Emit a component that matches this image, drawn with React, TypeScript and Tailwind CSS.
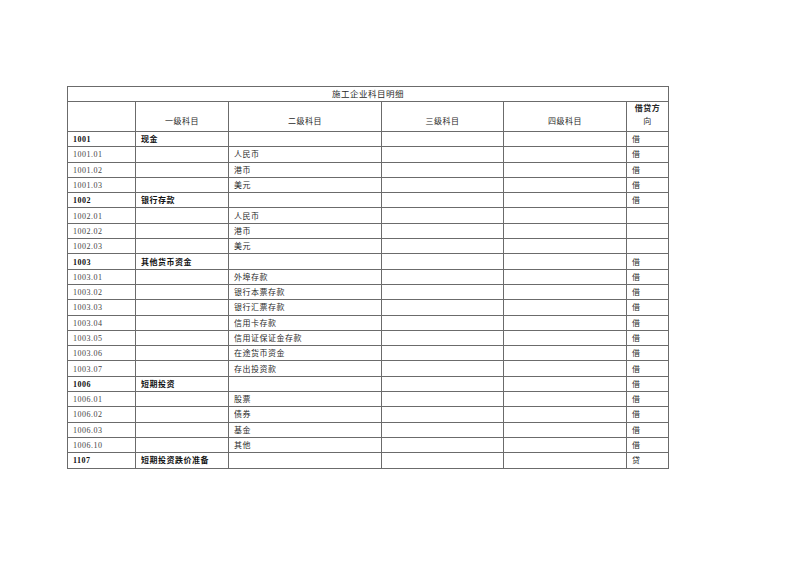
type Row = {
  code: string;
  first: string;
  second: string;
  dir: string;
  bold?: boolean;
};

const rows: Row[] = [
  { code: "1001", first: "现金", second: "", dir: "借", bold: true },
  { code: "1001.01", first: "", second: "人民币", dir: "借" },
  { code: "1001.02", first: "", second: "港币", dir: "借" },
  { code: "1001.03", first: "", second: "美元", dir: "借" },
  { code: "1002", first: "银行存款", second: "", dir: "借", bold: true },
  { code: "1002.01", first: "", second: "人民币", dir: "" },
  { code: "1002.02", first: "", second: "港币", dir: "" },
  { code: "1002.03", first: "", second: "美元", dir: "" },
  { code: "1003", first: "其他货币资金", second: "", dir: "借", bold: true },
  { code: "1003.01", first: "", second: "外埠存款", dir: "借" },
  { code: "1003.02", first: "", second: "银行本票存款", dir: "借" },
  { code: "1003.03", first: "", second: "银行汇票存款", dir: "借" },
  { code: "1003.04", first: "", second: "信用卡存款", dir: "借" },
  { code: "1003.05", first: "", second: "信用证保证金存款", dir: "借" },
  { code: "1003.06", first: "", second: "在途货币资金", dir: "借" },
  { code: "1003.07", first: "", second: "存出投资款", dir: "借" },
  { code: "1006", first: "短期投资", second: "", dir: "借", bold: true },
  { code: "1006.01", first: "", second: "股票", dir: "借" },
  { code: "1006.02", first: "", second: "债券", dir: "借" },
  { code: "1006.03", first: "", second: "基金", dir: "借" },
  { code: "1006.10", first: "", second: "其他", dir: "借" },
  { code: "1107", first: "短期投资跌价准备", second: "", dir: "贷", bold: true },
];

// 单元格通用样式
const cell = "border border-[#6b6b6b] h-[15.3px] px-[5px] pt-[2px] leading-[12px] align-middle whitespace-nowrap";
const head = "border border-[#6b6b6b] pb-[3px] leading-[12.5px] align-bottom text-center";

export default function App() {
  return (
    <div
      className="min-h-screen bg-white pt-[86px] pl-[67px] text-[8px] tracking-[0.5px] text-[#2a2a2a]"
      style={{ fontFamily: '"Liberation Serif", "Noto Sans CJK SC", serif' }}
    >
      <table className="border-collapse table-fixed w-[601px]">
        <colgroup>
          <col className="w-[68px]" />
          <col className="w-[93px]" />
          <col className="w-[153px]" />
          <col className="w-[122px]" />
          <col className="w-[123px]" />
          <col className="w-[42px]" />
        </colgroup>
        <thead>
          <tr>
            <th colSpan={6} className="border border-[#6b6b6b] h-[15px] font-normal text-center leading-[12px] text-[8.5px]">
              施工企业科目明细
            </th>
          </tr>
          <tr>
            <th className={`${head} h-[30px] font-normal`}></th>
            <th className={`${head} font-normal`}>一级科目</th>
            <th className={`${head} font-normal`}>二级科目</th>
            <th className={`${head} font-normal`}>三级科目</th>
            <th className={`${head} font-normal`}>四级科目</th>
            <th className={`${head} font-bold pb-[1px]`}>
              借贷方
              <br />
              <span className="font-normal">向</span>
            </th>
          </tr>
        </thead>
        <tbody>
          {rows.map((r) => (
            <tr key={r.code}>
              <td className={`${cell} ${r.bold ? "font-bold text-[#111]" : "text-[#444]"}`}>{r.code}</td>
              <td className={`${cell} ${r.bold ? "font-bold text-[#111]" : ""}`}>{r.first}</td>
              <td className={cell}>{r.second}</td>
              <td className={cell}></td>
              <td className={cell}></td>
              <td className={`${cell} px-[4px]`}>{r.dir}</td>
            </tr>
          ))}
        </tbody>
      </table>
    </div>
  );
}
